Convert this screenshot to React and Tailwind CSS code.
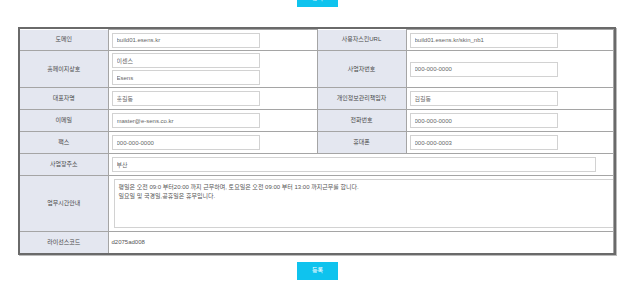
import React from "react";

const font = { fontFamily: '"Liberation Sans", "Noto Sans CJK KR", sans-serif' };

// text field inside a value cell
const Field = ({ value, wide }) => (
  <input
    type="text"
    defaultValue={value}
    className={`block h-[15px] border border-[#d2d2d2] bg-white px-[4px] text-[6px] text-[#666] outline-none ${
      wide ? "w-[484px]" : "w-[148px]"
    }`}
  />
);

const Label = ({ children, className = "" }) => (
  <th
    className={`w-[89px] border border-[#a5a5a5] bg-[#e4e7f0] text-center align-middle text-[6px] font-normal text-[#4a4a4a] ${className}`}
  >
    {children}
  </th>
);

const Cell = ({ children, colSpan }) => (
  <td
    colSpan={colSpan}
    className="border border-[#a5a5a5] bg-white pl-[3px] align-middle"
  >
    {children}
  </td>
);

export default function App() {
  const rows = [
    ["도메인", "build01.esens.kr", "사용자스킨URL", "build01.esens.kr/skin_nb1"],
    ["대표자명", "홍길동", "개인정보관리책임자", "김길동"],
    ["이메일", "master@e-sens.co.kr", "전화번호", "000-000-0000"],
    ["팩스", "000-000-0000", "휴대폰", "000-000-0003"],
  ];

  return (
    <div className="h-[295px] w-[640px] overflow-hidden bg-white" style={font}>
      {/* top save button, partly cut off */}
      <button className="-mt-[11px] ml-[297px] block h-[18px] w-[41px] bg-[#0fc3ee] text-[6px] text-white">
        등록
      </button>

      <div className="ml-[18px] mt-[20px] w-[598px] border-2 border-[#6a6a6a] shadow-[1px_1px_0_#bbb]">
        <table className="w-full table-fixed border-collapse">
          <colgroup>
            <col className="w-[88px]" />
            <col className="w-[209px]" />
            <col className="w-[89px]" />
            <col />
          </colgroup>
          <tbody>
            <tr className="h-[21px]">
              <Label className="border-t-0 border-l-0">{rows[0][0]}</Label>
              <Cell>
                <Field value={rows[0][1]} />
              </Cell>
              <Label className="border-t-0">{rows[0][2]}</Label>
              <Cell>
                <Field value={rows[0][3]} />
              </Cell>
            </tr>
            <tr className="h-[36px]">
              <Label className="border-l-0">홈페이지상호</Label>
              <Cell>
                <div className="flex flex-col gap-[2px] py-[2px]">
                  <Field value="이센스" />
                  <Field value="Esens" />
                </div>
              </Cell>
              <Label>사업자번호</Label>
              <Cell>
                <Field value="000-000-0000" />
              </Cell>
            </tr>
            {rows.slice(1).map((r) => (
              <tr key={r[0]} className="h-[22px]">
                <Label className="border-l-0">{r[0]}</Label>
                <Cell>
                  <Field value={r[1]} />
                </Cell>
                <Label>{r[2]}</Label>
                <Cell>
                  <Field value={r[3]} />
                </Cell>
              </tr>
            ))}
            <tr className="h-[22px]">
              <Label className="border-l-0">사업장주소</Label>
              <Cell colSpan={3}>
                <Field value="부산" wide />
              </Cell>
            </tr>
            <tr className="h-[56px]">
              <Label className="border-l-0">업무시간안내</Label>
              <Cell colSpan={3}>
                <textarea
                  className="ml-[2px] block h-[49px] w-[500px] resize-none border border-[#d2d2d2] px-[4px] py-[3px] text-[6px] leading-[9px] text-[#555] outline-none"
                  defaultValue={
                    "평일은 오전 09:0 부터20:00 까지 근무하며, 토요일은 오전 09:00 부터 13:00 까지근무를 합니다.\n일요일 및 국경일,공휴일은 휴무입니다."
                  }
                />
              </Cell>
            </tr>
            <tr className="h-[21px]">
              <Label className="border-b-0 border-l-0">라이선스코드</Label>
              <td
                colSpan={3}
                className="border border-b-0 border-[#a5a5a5] pl-[3px] align-middle text-[6px] text-[#555]"
              >
                d2075ad008
              </td>
            </tr>
          </tbody>
        </table>
      </div>

      <button className="ml-[297px] mt-[7px] block h-[18px] w-[41px] bg-[#0fc3ee] text-[6px] text-white">
        등록
      </button>
    </div>
  );
}
